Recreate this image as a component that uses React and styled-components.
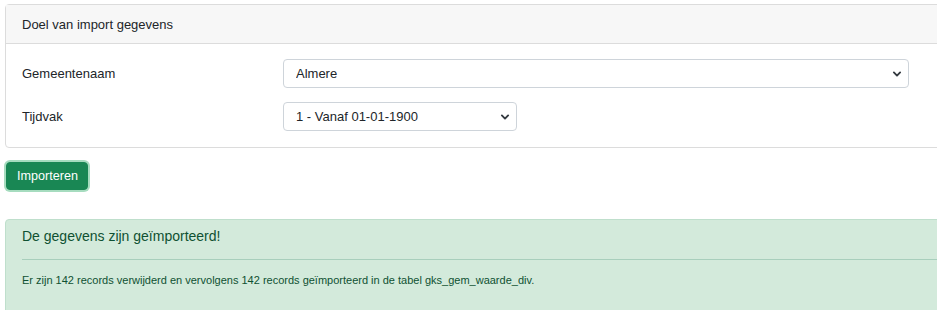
import React, { useState } from 'react';
import styled, { createGlobalStyle } from 'styled-components';

const GlobalStyle = createGlobalStyle`
  html, body {
    margin: 0;
    padding: 0;
    overflow: hidden;
    background: #fff;
  }
  body {
    font-family: "Liberation Sans", Arial, sans-serif;
    color: #212529;
  }
`;

const Page = styled.div`
  width: 980px;
  padding: 4px 0 0 5px;
  display: flex;
  flex-direction: column;
  align-items: flex-start;
`;

const Card = styled.section`
  align-self: stretch;
  border: 1px solid #dcdcdc;
  border-radius: 4px;
  background: #fff;
`;

const CardHeader = styled.div`
  height: 38px;
  display: flex;
  align-items: center;
  padding: 0 16px;
  background: #f7f7f7;
  border-bottom: 1px solid #dcdcdc;
  font-size: 13px;
`;

const CardBody = styled.div`
  display: grid;
  grid-template-columns: 261px 1fr;
  row-gap: 14px;
  align-items: center;
  padding: 15px 16px 16px;
`;

const Label = styled.label`
  font-size: 13px;
  line-height: 29px;
`;

const SelectWrap = styled.div`
  position: relative;
  width: ${p => p.$width}px;
`;

const Select = styled.select`
  appearance: none;
  -webkit-appearance: none;
  width: 100%;
  height: 29px;
  padding: 0 30px 0 12px;
  font-family: inherit;
  font-size: 13px;
  color: #212529;
  background: #fff;
  border: 1px solid #ced4da;
  border-radius: 4px;
  outline: none;
`;

const Chevron = styled.svg`
  position: absolute;
  right: 7px;
  top: 10px;
  width: 10px;
  height: 10px;
  pointer-events: none;
`;

const Button = styled.button`
  margin: 14px 0 0 1px;
  height: 28px;
  padding: 0 9px 0 10px;
  font-family: inherit;
  font-size: 12.6px;
  color: #fff;
  background: #198754;
  border: 1px solid #198754;
  border-radius: 4px;
  box-shadow: 0 0 0 2px #a6dcbf;
  cursor: pointer;
`;

const Alert = styled.div`
  align-self: stretch;
  margin-top: 29px;
  padding: 6px 16px 40px;
  background: #d3eadb;
  border: 1px solid #bfdfcc;
  border-radius: 4px;
  color: #0f5132;
`;

const AlertTitle = styled.div`
  font-size: 14px;
  line-height: 20px;
`;

const Divider = styled.hr`
  margin: 13px 0 12px;
  border: 0;
  border-top: 1px solid #a8cfbc;
`;

const AlertText = styled.div`
  font-size: 11px;
  line-height: 16px;
`;

function Dropdown({ width, value, options, onChange }) {
  return (
    <SelectWrap $width={width}>
      <Select value={value} onChange={e => onChange(e.target.value)}>
        {options.map(o => <option key={o} value={o}>{o}</option>)}
      </Select>
      <Chevron viewBox="0 0 16 16">
        <path d="M3 5.5l5 5 5-5" fill="none" stroke="#343a40" strokeWidth="3" strokeLinecap="round" strokeLinejoin="round" />
      </Chevron>
    </SelectWrap>
  );
}

export default function App() {
  const [gemeente, setGemeente] = useState('Almere');
  const [tijdvak, setTijdvak] = useState('1 - Vanaf 01-01-1900');

  return (
    <>
      <GlobalStyle />
      <Page>
        <Card>
          <CardHeader>Doel van import gegevens</CardHeader>
          <CardBody>
            <Label>Gemeentenaam</Label>
            <Dropdown width={626} value={gemeente} onChange={setGemeente}
              options={['Almere', 'Amsterdam', 'Utrecht']} />
            <Label>Tijdvak</Label>
            <Dropdown width={234} value={tijdvak} onChange={setTijdvak}
              options={['1 - Vanaf 01-01-1900']} />
          </CardBody>
        </Card>
        <Button>Importeren</Button>
        <Alert>
          <AlertTitle>De gegevens zijn geïmporteerd!</AlertTitle>
          <Divider />
          <AlertText>Er zijn 142 records verwijderd en vervolgens 142 records geïmporteerd in de tabel gks_gem_waarde_div.</AlertText>
        </Alert>
      </Page>
    </>
  );
}
